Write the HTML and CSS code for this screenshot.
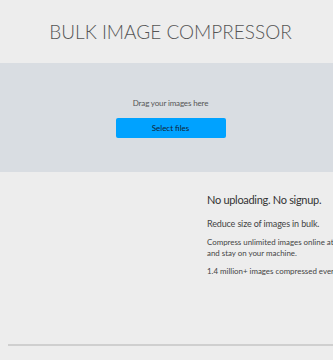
FILE: index.html
```html
<!DOCTYPE html>
<html lang="en">
  <head>
    <meta charset="UTF-8" />
    <meta name="viewport" content="width=device-width, initial-scale=1.0" />
    <title>Bulk Image Compressor</title>
    <link rel="stylesheet" href="styles.css">
  </head>
  <body>
    <div id="page">
      <header class="top">
        <h1 class="title">BULK IMAGE COMPRESSOR</h1>
      </header>

      <div id="dropzone" class="drop">
        <p class="drop-hint">Drag your images here</p>
        <button class="pick">Select files</button>
      </div>

      <section class="features">
        <div class="side"></div>
        <div class="info">
          <h2>No uploading. No signup.</h2>
          <p class="lead">Reduce size of images in bulk.</p>
          <p>Compress unlimited images online at once.<br />and stay on your machine.</p>
          <p>1.4 million+ images compressed every month.</p>
        </div>
      </section>

      <hr class="rule" />
    </div>
  </body>
</html>
```

FILE: styles.css
```css
* {
  padding: 0;
  margin: 0;
  box-sizing: border-box;
}
body {
  background-color: #ededed;
  font-family: Lato, "Open Sans", sans-serif;
  color: #444;
  overflow: hidden;
}
#page {
  width: 341px;
}
.top {
  height: 63px;
  display: flex;
  align-items: center;
  justify-content: center;
  padding-bottom: 1px;
}
.title {
  font-size: 19px;
  font-weight: 300;
  color: #555;
  white-space: nowrap;
}
.drop {
  height: 109px;
  background-color: #d9dde2;
  display: flex;
  flex-direction: column;
  align-items: center;
  padding-top: 35px;
}
.drop-hint {
  font-size: 8px;
  letter-spacing: -0.15px;
  color: #555;
  line-height: 10px;
}
.pick {
  margin-top: 10px;
  width: 110px;
  height: 20px;
  border: none;
  border-radius: 2px;
  background-color: #00a2ff;
  color: #123;
  font-family: inherit;
  font-size: 8px;
}
.features {
  display: flex;
  height: 172px;
  padding-top: 19px;
}
.side {
  width: 207px;
  flex-shrink: 0;
}
.info {
  width: 330px;
  flex-shrink: 0;
  white-space: nowrap;
}
.info h2 {
  font-size: 11px;
  letter-spacing: -0.3px;
  font-weight: 400;
  color: #333;
  line-height: 18px;
}
.info p {
  font-size: 7.9px;
  line-height: 11px;
  color: #444;
  margin-top: 7px;
}
.info p.lead {
  font-size: 9px;
  letter-spacing: -0.15px;
  line-height: 13px;
  margin-top: 8px;
}
.rule {
  margin-left: 8px;
  border: none;
  border-top: 2px solid #cfcfcf;
}
```
